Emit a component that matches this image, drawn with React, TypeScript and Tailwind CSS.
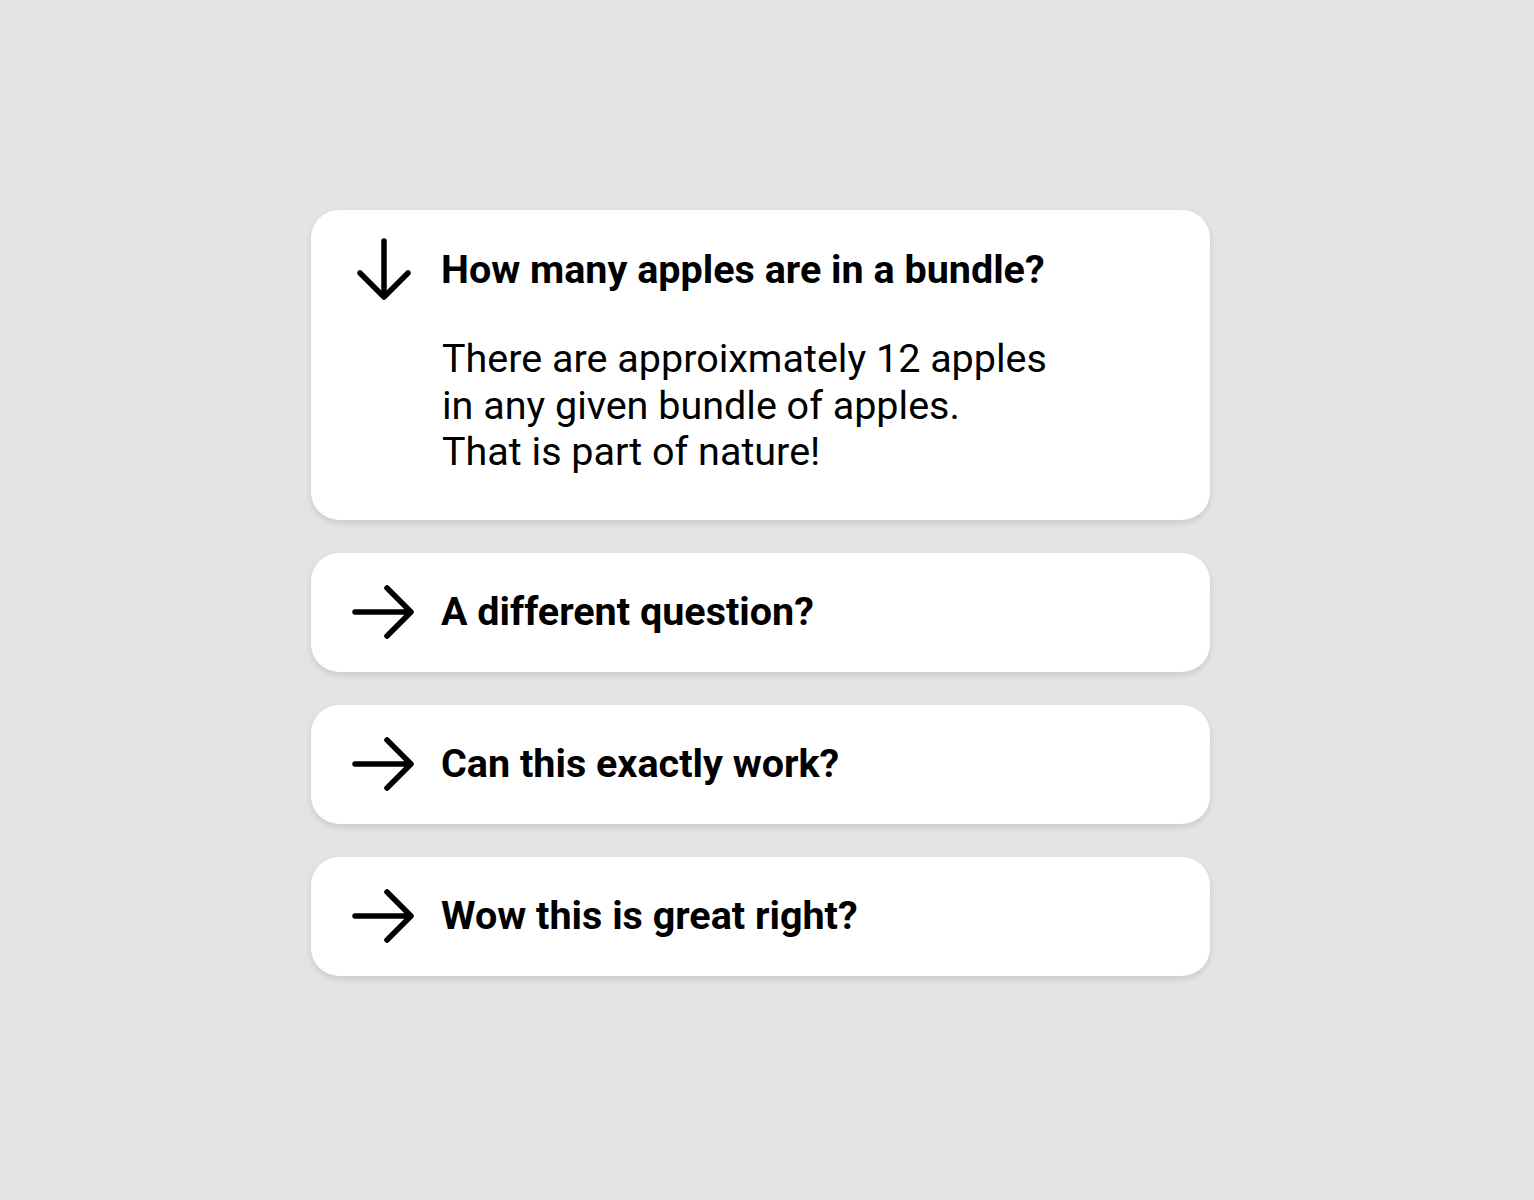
import { useState } from 'react'

const items = [
  {
    q: 'How many apples are in a bundle?',
    a: ['There are approixmately 12 apples', 'in any given bundle of apples.', 'That is part of nature!'],
  },
  { q: 'A different question?', a: ['Some answer.'] },
  { q: 'Can this exactly work?', a: ['Some answer.'] },
  { q: 'Wow this is great right?', a: ['Some answer.'] },
]

function Arrow({ open }: { open: boolean }) {
  return (
    <svg
      viewBox="0 0 64 54"
      className={open ? 'w-[64px] h-[54px] rotate-90' : 'w-[64px] h-[54px]'}
      fill="none"
      stroke="#000"
      strokeWidth={5.5}
      strokeLinecap="round"
      strokeLinejoin="round"
    >
      <path d="M3 27H59M35 3L59 27L35 51" />
    </svg>
  )
}

export default function App() {
  const [openIdx, setOpenIdx] = useState(0)

  return (
    <div className="min-h-[1200px] bg-[#e4e4e4] pt-[210px] pl-[311px]" style={{ fontFamily: 'Roboto, sans-serif' }}>
      <div className="w-[899px] flex flex-col gap-[33px]">
        {items.map((item, i) => {
          const open = openIdx === i
          return (
            <div
              key={i}
              onClick={() => setOpenIdx(open ? -1 : i)}
              className="bg-white rounded-[28px] shadow-[0_3px_6px_rgba(0,0,0,0.12)] cursor-pointer"
            >
              <div className="flex items-center h-[119px] pl-[41px]">
                <div className="w-[89px] flex items-center">
                  <Arrow open={open} />
                </div>
                <h2 className="text-[39.5px] font-bold text-black">{item.q}</h2>
              </div>
              {open && (
                <div className="pl-[131px] pb-[44px] mt-[7px] text-[39.5px] leading-[46.5px] text-black">
                  {item.a.map((l, j) => <p key={j}>{l}</p>)}
                </div>
              )}
            </div>
          )
        })}
      </div>
    </div>
  )
}
